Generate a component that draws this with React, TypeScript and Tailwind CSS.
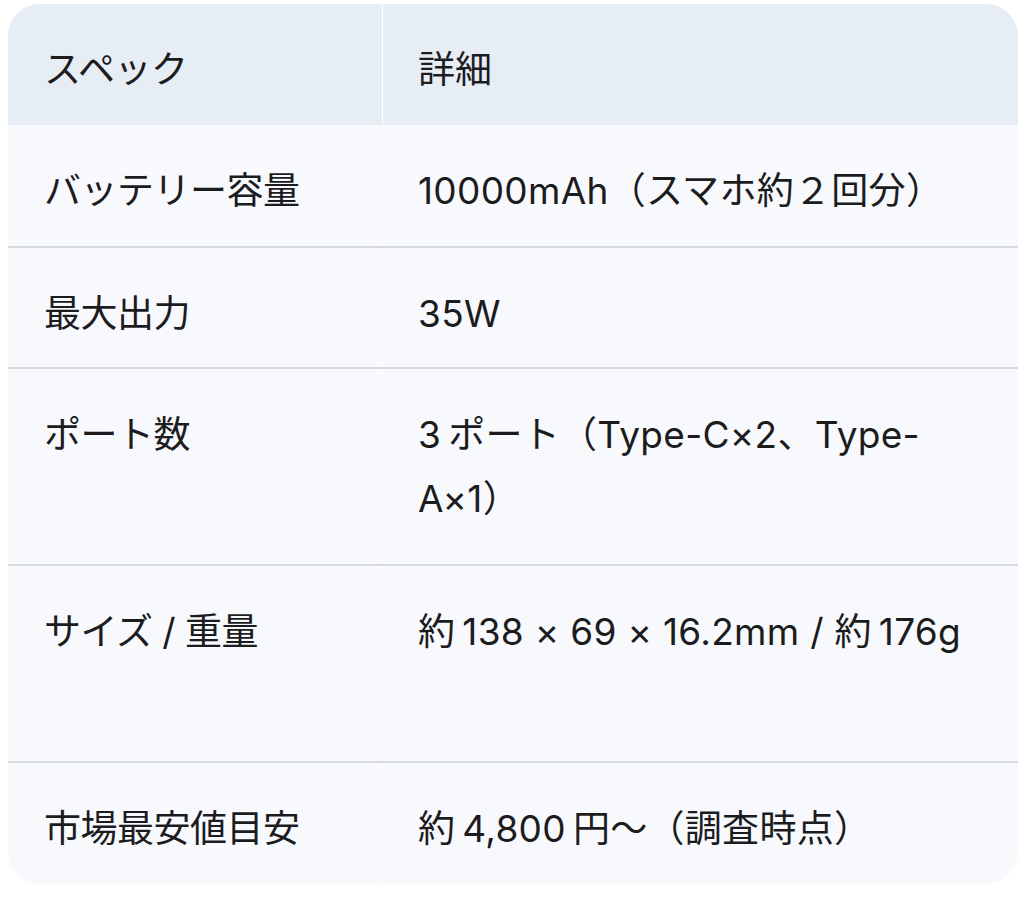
import React from 'react';

// thin space, stands in for the CJK/Latin auto-spacing seen in the shot
const ts = '\u2009';

const rows: { label: string; value: React.ReactNode; tall?: boolean }[] = [
  { label: 'バッテリー容量', value: '10000mAh（スマホ約２回分）' },
  { label: '最大出力', value: '35W' },
  {
    label: 'ポート数',
    value: (
      <>
        {`3${ts}ポート（Type-C×2、Type-`}
        <br />
        A×1）
      </>
    ),
    tall: true,
  },
  { label: 'サイズ / 重量', value: `約${ts}138 × 69 × 16.2mm / 約${ts}176g`, tall: true },
  { label: '市場最安値目安', value: `約${ts}4,800${ts}円〜（調査時点）` },
];

export default function App() {
  return (
    <div
      className="min-h-[902px] w-full bg-white pt-[4px] pl-[8px] pr-[6px] text-[#1c1c1e]"
      style={{ fontFamily: 'Inter, "Noto Sans CJK JP", sans-serif' }}
    >
      <div className="overflow-hidden rounded-[32px] bg-[#f7f9fc]">
        {/* header */}
        <div className="grid h-[121px] grid-cols-[375px_1fr] bg-[#e7edf5]">
          <div className="border-r border-white pl-[36px] pt-[34px] text-[37px] leading-[64px] tracking-[-0.5px]">
            スペック
          </div>
          <div className="pl-[35px] pt-[34px] text-[37px] leading-[64px]">詳細</div>
        </div>

        {rows.map((r, i) => (
          <div
            key={i}
            className={
              'grid grid-cols-[375px_1fr] ' +
              (i > 0 ? 'border-t-2 border-[#d6d9de] ' : '') +
              (r.tall ? 'h-[197px]' : i === rows.length - 1 ? 'h-[123px]' : 'h-[121px]')
            }
          >
            <div className="border-r border-white/70 pl-[36px] pt-[34px] text-[37px] leading-[64px] tracking-[-0.5px]">
              {r.label}
            </div>
            <div className="whitespace-nowrap pl-[35px] pt-[34px] text-[37px] leading-[64px] tracking-[0.3px]">
              {r.value}
            </div>
          </div>
        ))}
      </div>
    </div>
  );
}
